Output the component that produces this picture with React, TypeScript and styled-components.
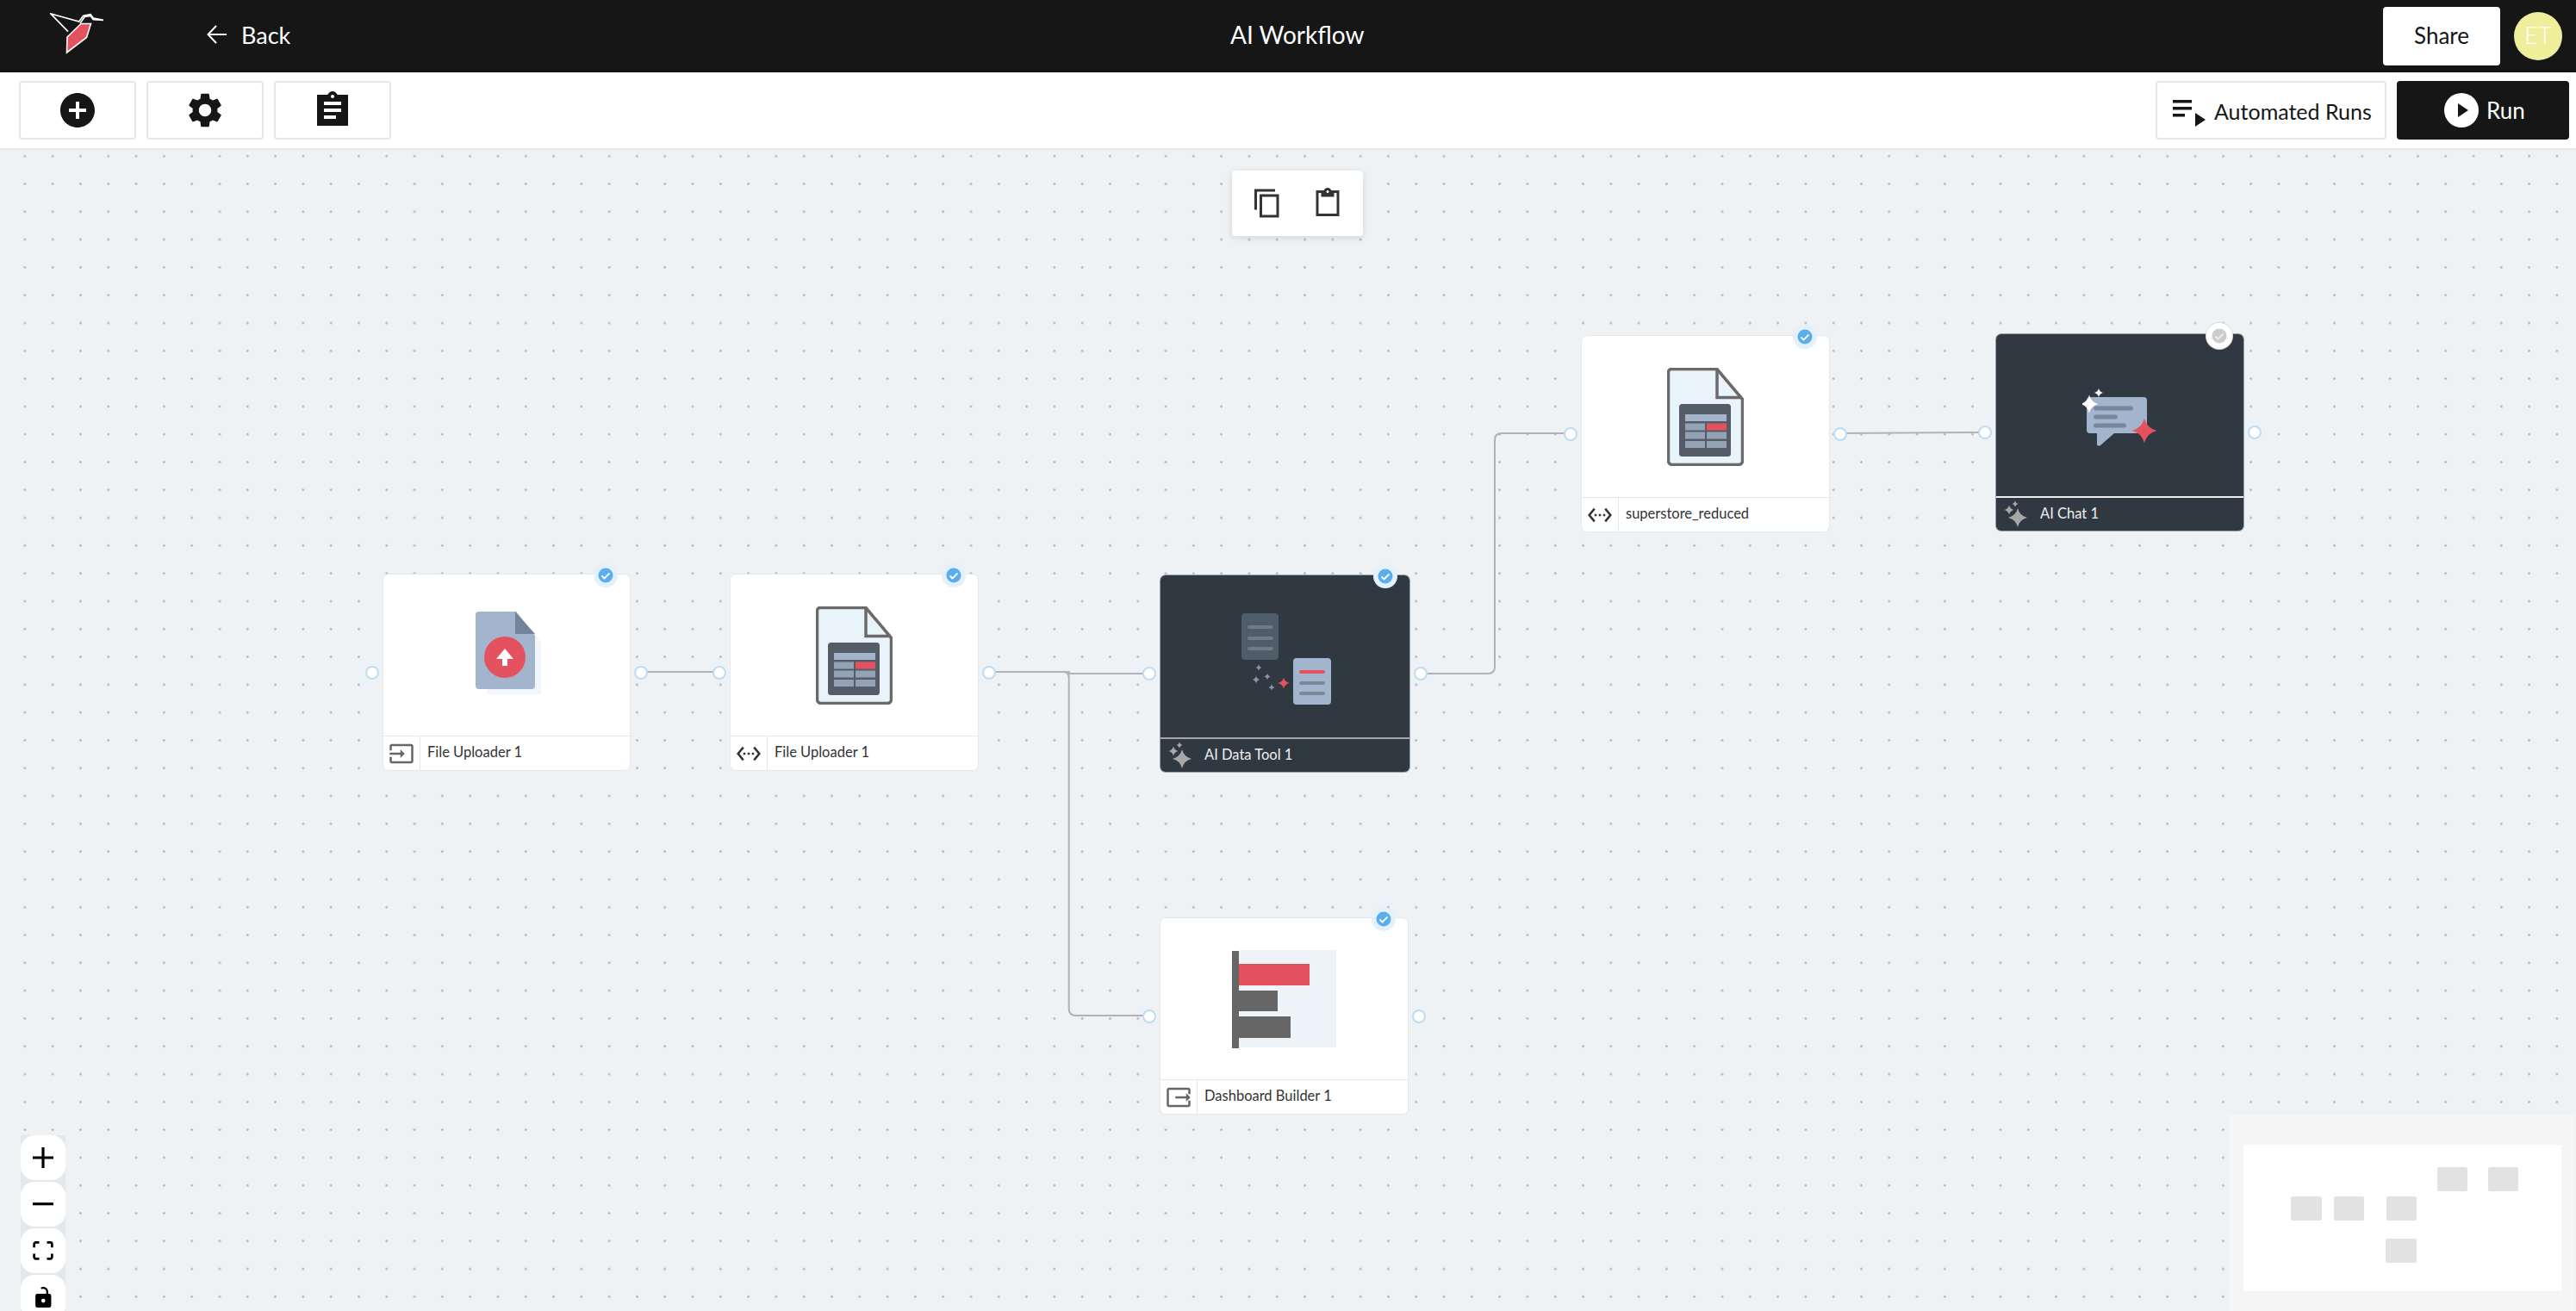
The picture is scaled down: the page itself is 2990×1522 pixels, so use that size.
import React from 'react'
import styled, { createGlobalStyle } from 'styled-components'
import { MdSettings } from 'react-icons/md'

const RED = '#e5525f'
const BLUE_GREY = '#a3b5cd'
const CANVAS_TOP = 174

// four point star, r is the tip distance from the centre
const sparkle = (cx: number, cy: number, r: number) => {
  const k = r * 0.2
  return `M${cx} ${cy - r}Q${cx + k} ${cy - k} ${cx + r} ${cy}Q${cx + k} ${cy + k} ${cx} ${cy + r}Q${cx - k} ${cy + k} ${cx - r} ${cy}Q${cx - k} ${cy - k} ${cx} ${cy - r}Z`
}

const InputIcon = () => (
  <svg width="30" height="30" viewBox="0 0 24 24" fill="#666">
    <path d="M21 3.01H3c-1.1 0-2 .9-2 2V9h2V4.99h18v14.03H3V15H1v4.01c0 1.1.9 1.98 2 1.98h18c1.1 0 2-.88 2-1.98v-14c0-1.11-.9-2-2-2zM11 16l4-4-4-4v3H1v2h10v3z" />
  </svg>
)

const OutputIcon = () => (
  <svg width="30" height="30" viewBox="0 0 24 24" fill="#666">
    <path d="M3 3.01h18c1.1 0 2 .89 2 2V9h-2V4.99H3v14.03h18V15h2v4.01c0 1.1-.9 1.98-2 1.98H3c-1.1 0-2-.88-2-1.98v-14c0-1.11.9-2 2-2zM19 16l4-4-4-4v3H9v2h10v3z" />
  </svg>
)

const CodeIcon = () => (
  <svg width="30" height="30" viewBox="0 0 24 24" fill="#333">
    <path d="M7.77 6.76L6.23 5.48.82 12l5.41 6.52 1.54-1.28L3.42 12l4.35-5.24zM7 13h2v-2H7v2zm10-2h-2v2h2v-2zm-6 2h2v-2h-2v2zm6.77-7.52l-1.54 1.28L20.58 12l-4.35 5.24 1.54 1.28L23.18 12l-5.41-6.52z" />
  </svg>
)

const AiIcon = () => (
  <svg width="30" height="32" viewBox="0 0 30 32" fill="#a7a7a7">
    <path d={sparkle(19, 20, 11)} />
    <path d={sparkle(9, 11, 5.5)} />
    <path d={sparkle(16, 4, 3.5)} />
  </svg>
)

const UploadArt = () => (
  <svg width="84" height="101" viewBox="-6 0 84 101">
    <path d="M13 25h55l8 11v60H13z" fill="#f1f7fc" />
    <path d="M4 0h43l22 28v58a4 4 0 0 1-4 4H4a4 4 0 0 1-4-4V4a4 4 0 0 1 4-4z" fill={BLUE_GREY} />
    <path d="M46 0l23 26H46z" fill="#73859a" />
    <circle cx="34" cy="53" r="24" fill={RED} />
    <path d="M34 43l10 12h-7v8h-6v-8h-7z" fill="#fff" />
  </svg>
)

const SheetArt = () => (
  <svg width="89" height="114" viewBox="0 0 89 114">
    <path d="M5 1.500h53l29.500 35V108a4.500 4.500 0 0 1-4.500 4.500H6A4.500 4.500 0 0 1 1.500 108V5A3.500 3.500 0 0 1 5 1.500z" fill="#e8f3fa" stroke="#6a6a6a" strokeWidth="3.500" />
    <path d="M58 2v32.500h29" fill="none" stroke="#6a6a6a" strokeWidth="3.500" />
    <rect x="14" y="42" width="60" height="61" rx="3.500" fill="#555c67" />
    <rect x="21" y="54" width="48" height="8" fill={BLUE_GREY} />
    <rect x="21" y="64.500" width="23" height="8" fill="#93a3b5" />
    <rect x="46" y="64.500" width="23" height="8" fill={RED} />
    <rect x="21" y="74.500" width="23" height="8" fill="#93a3b5" />
    <rect x="46" y="74.500" width="23" height="8" fill="#93a3b5" />
    <rect x="21" y="85" width="23" height="8" fill="#93a3b5" />
    <rect x="46" y="85" width="23" height="8" fill="#93a3b5" />
  </svg>
)

const DataToolArt = () => (
  <svg width="107" height="111" viewBox="-3 -5 107 111">
    <rect x="0" y="0" width="43" height="54" rx="4" fill="#4f5c69" />
    <rect x="7" y="14" width="30" height="4" rx="2" fill="#6f7b87" />
    <rect x="7" y="27" width="30" height="4" rx="2" fill="#6f7b87" />
    <rect x="7" y="39" width="30" height="4" rx="2" fill="#6f7b87" />
    <rect x="60" y="52" width="44" height="54" rx="4" fill={BLUE_GREY} />
    <rect x="67" y="66" width="30" height="4" rx="2" fill={RED} />
    <rect x="67" y="79" width="30" height="4" rx="2" fill="#7a8898" />
    <rect x="67" y="91" width="30" height="4" rx="2" fill="#7a8898" />
    <path d={sparkle(20, 63, 3.5)} fill="#8795a5" />
    <path d={sparkle(17, 77, 4.5)} fill="#8795a5" />
    <path d={sparkle(30, 73.5, 3.5)} fill="#8795a5" />
    <path d={sparkle(35, 86, 3.5)} fill="#8795a5" />
    <path d={sparkle(49, 81, 6.5)} fill={RED} />
  </svg>
)

const ChatArt = () => (
  <svg width="88" height="71" viewBox="0 -3 88 71">
    <path d="M9 11h62a4 4 0 0 1 4 4v34a4 4 0 0 1-4 4H37L21 67c-2 1-4 .5-4-1V53H9a4 4 0 0 1-4-4V15a4 4 0 0 1 4-4z" fill={BLUE_GREY} />
    <rect x="13" y="21.500" width="46" height="5" rx="2.500" fill="#77889e" />
    <rect x="13" y="31.500" width="28" height="5" rx="2.500" fill="#77889e" />
    <rect x="13" y="41.500" width="38" height="5" rx="2.500" fill="#77889e" />
    <path d={sparkle(8, 19, 10.5)} fill="#fff" />
    <path d={sparkle(19, 6, 5)} fill="#fff" />
    <path d={sparkle(72, 50, 14.5)} fill={RED} />
  </svg>
)

const ChartArt = () => (
  <svg width="121" height="114" viewBox="0 0 121 114">
    <rect x="8" y="0" width="113" height="113" fill="#eef3f7" />
    <rect x="0" y="1" width="8" height="113" fill="#666" />
    <rect x="8" y="16" width="82" height="25" fill={RED} />
    <rect x="8" y="47" width="45" height="24" fill="#666" />
    <rect x="8" y="77" width="60" height="25" fill="#666" />
  </svg>
)

const CheckBadge = ({ $idle }: { $idle?: boolean }) => (
  <Badge $idle={$idle}>
    <svg width="18" height="18" viewBox="0 0 18 18">
      <circle cx="9" cy="9" r="8.500" fill={$idle ? '#ccc' : '#5aaeec'} />
      <path d="M4.500 9.500l3 3 6-6" fill="none" stroke={$idle ? '#eee' : '#fff'} strokeWidth="1.800" />
    </svg>
  </Badge>
)

type NodeData = {
  x: number
  y: number
  w: number
  h: number
  label: string
  art: React.ReactNode
  icon: React.ReactNode
  dark?: boolean
  idle?: boolean
  line?: string
}

const nodes: NodeData[] = [
  { x: 445, y: 667, w: 286, h: 227, label: 'File Uploader 1', art: <UploadArt />, icon: <InputIcon /> },
  { x: 848, y: 667, w: 287, h: 227, label: 'File Uploader 1', art: <SheetArt />, icon: <CodeIcon /> },
  { x: 1347, y: 668, w: 289, h: 228, label: 'AI Data Tool 1', art: <DataToolArt />, icon: <AiIcon />, dark: true, line: '#a6a6a6' },
  { x: 1347, y: 1066, w: 287, h: 227, label: 'Dashboard Builder 1', art: <ChartArt />, icon: <OutputIcon /> },
  { x: 1836, y: 390, w: 287, h: 227, label: 'superstore_reduced', art: <SheetArt />, icon: <CodeIcon /> },
  { x: 2317, y: 388, w: 287, h: 228, label: 'AI Chat 1', art: <ChatArt />, icon: <AiIcon />, dark: true, idle: true, line: '#eeeeee' },
]

const edges = [
  'M744 780H835',
  'M1148 780H1241V782H1335',
  'M1234 780Q1240.700 780 1240.700 787V1171Q1240.700 1179 1249 1179H1334',
  'M1648 782H1727Q1735 782 1735 774V511Q1735 503 1743 503H1823',
  'M2136 503L2304 502',
]

const minimapNodes = [
  [2828, 1355, 35, 28],
  [2887, 1355, 35, 28],
  [2658, 1389, 36, 28],
  [2708, 1389, 35, 28],
  [2769, 1389, 35, 28],
  [2768, 1438, 36, 28],
]

const App: React.FC = () => {
  return (
    <Page>
      <GlobalStyle />
      <TopBar>
        <TopLeft>
          <Logo width="66" height="50" viewBox="0 0 66 50">
            <path d="M36 12.500H47.500L42.500 28.500L19.500 46L20 28Z" fill={RED} stroke="#fff" strokeWidth="1.600" />
            <path d="M21 21.700L1 1L33.700 10L38.700 3.300L47 1.700L50.300 6L62 8.300L50.300 7.700L47 3.500L40.300 4.500L35 12" fill="none" stroke="#fff" strokeWidth="1.700" />
          </Logo>
          <BackLink>
            <svg width="24" height="24" viewBox="0 0 24 24" fill="none" stroke="#fff" strokeWidth="2">
              <path d="M23 12H2M11 2L1.500 12l9.500 10" />
            </svg>
            Back
          </BackLink>
        </TopLeft>
        <Title>AI Workflow</Title>
        <TopRight>
          <ShareButton>Share</ShareButton>
          <Avatar>ET</Avatar>
        </TopRight>
      </TopBar>

      <Toolbar>
        <ToolGroup>
          <ToolButton>
            <svg width="48" height="48" viewBox="0 0 24 24" fill="#161616">
              <path d="M12 2C6.480 2 2 6.480 2 12s4.480 10 10 10 10-4.480 10-10S17.520 2 12 2zm5 11h-4v4h-2v-4H7v-2h4V7h2v4h4v2z" />
            </svg>
          </ToolButton>
          <ToolButton>
            <MdSettings size={48} color="#161616" />
          </ToolButton>
          <ToolButton>
            <svg width="48" height="48" viewBox="0 0 24 24" fill="#161616">
              <path d="M21 3h-6.180C14.400 1.840 13.300 1 12 1s-2.400.840-2.820 2H3v18h18V3zm-9 0c.550 0 1 .450 1 1s-.450 1-1 1-1-.450-1-1 .450-1 1-1zm2 14H7v-2h7v2zm3-4H7v-2h10v2zm0-4H7V7h10v2z" />
            </svg>
          </ToolButton>
        </ToolGroup>
        <ToolGroup>
          <RunsButton>
            <svg width="38" height="34" viewBox="0 0 38 34" fill="#161616">
              <rect x="0" y="0" width="22" height="3.500" />
              <rect x="0" y="8" width="22" height="3.500" />
              <rect x="0" y="16" width="14" height="3.500" />
              <path d="M26 15l12 8-12 8z" />
            </svg>
            Automated Runs
          </RunsButton>
          <RunButton>
            <svg width="40" height="40" viewBox="0 0 40 40">
              <circle cx="20" cy="20" r="20" fill="#fff" />
              <path d="M16 12l12 8-12 8z" fill="#161616" />
            </svg>
            Run
          </RunButton>
        </ToolGroup>
      </Toolbar>

      <Canvas>
        <EdgeLayer viewBox={`0 ${CANVAS_TOP} 2990 ${1522 - CANVAS_TOP}`}>
          {edges.map((d) => (
            <path key={d} d={d} fill="none" stroke="#b1b1b7" strokeWidth="2" />
          ))}
        </EdgeLayer>

        {nodes.map((n, i) => (
          <FlowNode key={i} $x={n.x} $y={n.y - CANVAS_TOP} $w={n.w} $h={n.h} $dark={n.dark}>
            <NodeBody>{n.art}</NodeBody>
            <NodeFooter $dark={n.dark} $line={n.line}>
              <FooterIcon $dark={n.dark}>{n.icon}</FooterIcon>
              <NodeLabel $dark={n.dark}>{n.label}</NodeLabel>
            </NodeFooter>
            <Handle $side="left" />
            <Handle $side="right" />
            <CheckBadge $idle={n.idle} />
          </FlowNode>
        ))}

        <ClipboardPanel>
          <svg width="36" height="36" viewBox="0 0 24 24" fill="#333">
            <path d="M16 1H2v16h2V3h14V1zm5 4H6v18h15V5zm-2 16H8V7h11v14z" />
          </svg>
          <svg width="36" height="36" viewBox="0 0 24 24" fill="#333">
            <path d="M21 2h-6.180C14.400.840 13.300 0 12 0S9.600.840 9.180 2H3v20h18V2zm-9 0c.550 0 1 .450 1 1s-.450 1-1 1-1-.450-1-1 .450-1 1-1zm7 18H5V4h2v3h10V4h2v16z" />
          </svg>
        </ClipboardPanel>

        <Controls>
          <ControlButton>
            <svg width="24" height="24" viewBox="0 0 32 32"><path d="M32 18.133H18.133V32h-4.266V18.133H0v-4.266h13.867V0h4.266v13.867H32z" /></svg>
          </ControlButton>
          <ControlButton>
            <svg width="24" height="4" viewBox="0 0 32 5"><path d="M0 0h32v4.200H0z" /></svg>
          </ControlButton>
          <ControlButton>
            <svg width="24" height="22" viewBox="0 0 32 30"><path d="M3.692 4.630c0-.530.400-.938.939-.938h5.215V0H4.708C2.130 0 0 2.054 0 4.630v5.216h3.692V4.631zM27.354 0h-5.200v3.692h5.170c.530 0 .984.400.984.939v5.215H32V4.631A4.624 4.624 0 0027.354 0zm.954 24.830c0 .532-.400.940-.939.940h-5.215v3.768h5.215c2.577 0 4.631-2.130 4.631-4.707v-5.139h-3.692v5.139zm-23.677.940c-.531 0-.939-.400-.939-.940v-5.138H0v5.139c0 2.577 2.130 4.707 4.708 4.707h5.138V25.770H4.631z" /></svg>
          </ControlButton>
          <ControlButton>
            <svg width="19" height="24" viewBox="0 0 25 32"><path d="M21.333 10.667H19.810V7.619C19.810 3.429 16.380 0 12.190 0c-1.500 0-2.900.400-4.100 1.200l1.600 2.400c.700-.400 1.600-.600 2.500-.600 2.590 0 4.571 1.981 4.571 4.619v3.048H3.048A3.056 3.056 0 000 13.714v15.238A3.056 3.056 0 003.048 32h18.285a3.056 3.056 0 003.048-3.048V13.714a3.056 3.056 0 00-3.048-3.048zM12.190 24.533a3.056 3.056 0 01-3.047-3.047 3.056 3.056 0 013.047-3.048 3.056 3.056 0 013.048 3.048 3.056 3.056 0 01-3.048 3.047z" /></svg>
          </ControlButton>
        </Controls>

        <MiniMap>
          <svg width="369" height="170" viewBox="2603 1329 369 170">
            <rect x="2603" y="1329" width="369" height="170" fill="#fff" />
            {minimapNodes.map(([x, y, w, h]) => (
              <rect key={`${x}-${y}`} x={x} y={y} width={w} height={h} rx="2" fill="#e2e2e2" />
            ))}
          </svg>
        </MiniMap>
      </Canvas>
    </Page>
  )
}

export default App

const GlobalStyle = createGlobalStyle`
  html, body {
    margin: 0;
    padding: 0;
    height: 100%;
    overflow: hidden;
    font-family: Lato, "Noto Sans", sans-serif;
  }

  #root {
    height: 100%;
  }

  * {
    box-sizing: border-box;
  }
`

const Page = styled.div`
  display: flex;
  flex-direction: column;
  height: 100vh;
`

const TopBar = styled.header`
  display: grid;
  grid-template-columns: 1428px auto 1fr;
  align-items: center;
  height: 84px;
  background: #161616;
  color: #fff;
`

const TopLeft = styled.div`
  display: flex;
  align-items: center;
  padding-left: 58px;
`

const Logo = styled.svg`
  flex: none;
  margin-right: 116px;
  margin-bottom: 4px;
`

const BackLink = styled.span`
  display: flex;
  align-items: center;
  gap: 16px;
  padding-bottom: 4px;
  font-size: 27px;
`

const Title = styled.h1`
  margin: 0;
  padding-bottom: 4px;
  font-size: 28px;
  font-weight: 400;
`

const TopRight = styled.div`
  display: flex;
  align-items: center;
  justify-content: flex-end;
  gap: 16px;
  padding-right: 16px;
`

const ShareButton = styled.button`
  width: 136px;
  height: 68px;
  padding: 0 0 3px;
  border: none;
  border-radius: 4px;
  background: #fff;
  color: #161616;
  font: 400 26px Lato, sans-serif;
`

const Avatar = styled.div`
  display: flex;
  align-items: center;
  justify-content: center;
  width: 56px;
  height: 56px;
  padding-bottom: 3px;
  border-radius: 50%;
  background: #eeee9b;
  color: #fff;
  font-size: 27px;
  font-weight: 300;
`

const Toolbar = styled.nav`
  display: flex;
  justify-content: space-between;
  height: 90px;
  padding: 10px 8px 0 22px;
  background: #fff;
  border-bottom: 2px solid #e6e8ea;
`

const ToolGroup = styled.div`
  display: flex;
  gap: 12px;
`

const ToolButton = styled.button`
  display: flex;
  align-items: center;
  justify-content: center;
  width: 136px;
  height: 68px;
  padding: 0;
  background: #fff;
  border: 2px solid #e6e6e6;
  border-radius: 4px;
`

const RunsButton = styled(ToolButton)`
  justify-content: flex-start;
  gap: 10px;
  width: 268px;
  padding: 2px 0 0 18px;
  color: #161616;
  font: 400 25px Lato, sans-serif;

  svg {
    margin-top: 8px;
  }
`

const RunButton = styled(ToolButton)`
  justify-content: flex-start;
  gap: 9px;
  width: 200px;
  padding-left: 53px;
  background: #161616;
  border-color: #161616;
  color: #fff;
  font: 400 26px Lato, sans-serif;
`

const Canvas = styled.main`
  position: relative;
  flex: 1;
  overflow: hidden;
  background-color: #eef2f5;
  background-image: radial-gradient(circle at center, #b4b8bc 1px, transparent 1.6px);
  background-size: 32.3px 32.3px;
  background-position: 12.75px -8.95px;
`

const EdgeLayer = styled.svg`
  position: absolute;
  inset: 0;
  width: 100%;
  height: 100%;
`

const FlowNode = styled.div<{ $x: number; $y: number; $w: number; $h: number; $dark?: boolean }>`
  position: absolute;
  left: ${(p) => p.$x}px;
  top: ${(p) => p.$y}px;
  display: flex;
  flex-direction: column;
  width: ${(p) => p.$w}px;
  height: ${(p) => p.$h}px;
  background: ${(p) => (p.$dark ? '#303842' : '#fff')};
  box-shadow: 0 0 0 1px ${(p) => (p.$dark ? '#9aa0a6' : '#e6e9ec')};
  border-radius: 6px;
`

const NodeBody = styled.div`
  display: flex;
  flex: 1;
  align-items: center;
  justify-content: center;
`

const NodeFooter = styled.div<{ $dark?: boolean; $line?: string }>`
  display: flex;
  flex: none;
  align-items: stretch;
  height: 40px;
  border-top: ${(p) => (p.$dark ? 2 : 1)}px solid ${(p) => p.$line || '#e6e9ec'};
`

const FooterIcon = styled.div<{ $dark?: boolean }>`
  display: flex;
  flex: none;
  align-items: center;
  justify-content: center;
  width: 43px;
  border-right: 1px solid ${(p) => (p.$dark ? 'transparent' : '#e6e9ec')};
`

const NodeLabel = styled.span<{ $dark?: boolean }>`
  padding-left: 8px;
  color: ${(p) => (p.$dark ? '#eef0f2' : '#333')};
  font-size: 16.5px;
  line-height: 36px;
`

const Handle = styled.span<{ $side: 'left' | 'right' }>`
  position: absolute;
  top: 50%;
  ${(p) => p.$side}: -21px;
  width: 16px;
  height: 16px;
  margin-top: -8px;
  background: #fff;
  border: 2px solid #bcdcf2;
  border-radius: 50%;
`

const Badge = styled.span<{ $idle?: boolean }>`
  position: absolute;
  top: -13px;
  right: ${(p) => (p.$idle ? 13 : 14)}px;
  display: flex;
  align-items: center;
  justify-content: center;
  width: ${(p) => (p.$idle ? 30 : 28)}px;
  height: ${(p) => (p.$idle ? 30 : 28)}px;
  background: ${(p) => (p.$idle ? '#fff' : '#e4f1fa')};
  box-shadow: ${(p) => (p.$idle ? '0 0 0 1px #ddd' : 'none')};
  border-radius: 50%;
`

const ClipboardPanel = styled.div`
  position: absolute;
  top: 24px;
  left: 1430px;
  display: flex;
  align-items: center;
  justify-content: center;
  gap: 34px;
  width: 152px;
  height: 76px;
  background: #fff;
  border-radius: 4px;
  box-shadow: 0 2px 8px rgba(0, 0, 0, 0.12);
`

const Controls = styled.div`
  position: absolute;
  top: 1144px;
  left: 24px;
  display: flex;
  flex-direction: column;
  gap: 2px;
  width: 52px;
  background: #e4e7eb;
`

const ControlButton = styled.button`
  display: flex;
  flex: none;
  align-items: center;
  justify-content: center;
  width: 52px;
  height: 52px;
  padding: 0;
  background: #fff;
  border: none;
  border-radius: 16px;
`

const MiniMap = styled.div`
  position: absolute;
  top: 1120px;
  left: 2588px;
  display: flex;
  justify-content: center;
  width: 400px;
  height: 228px;
  padding-top: 35px;
  background: #f5f5f5;
`
